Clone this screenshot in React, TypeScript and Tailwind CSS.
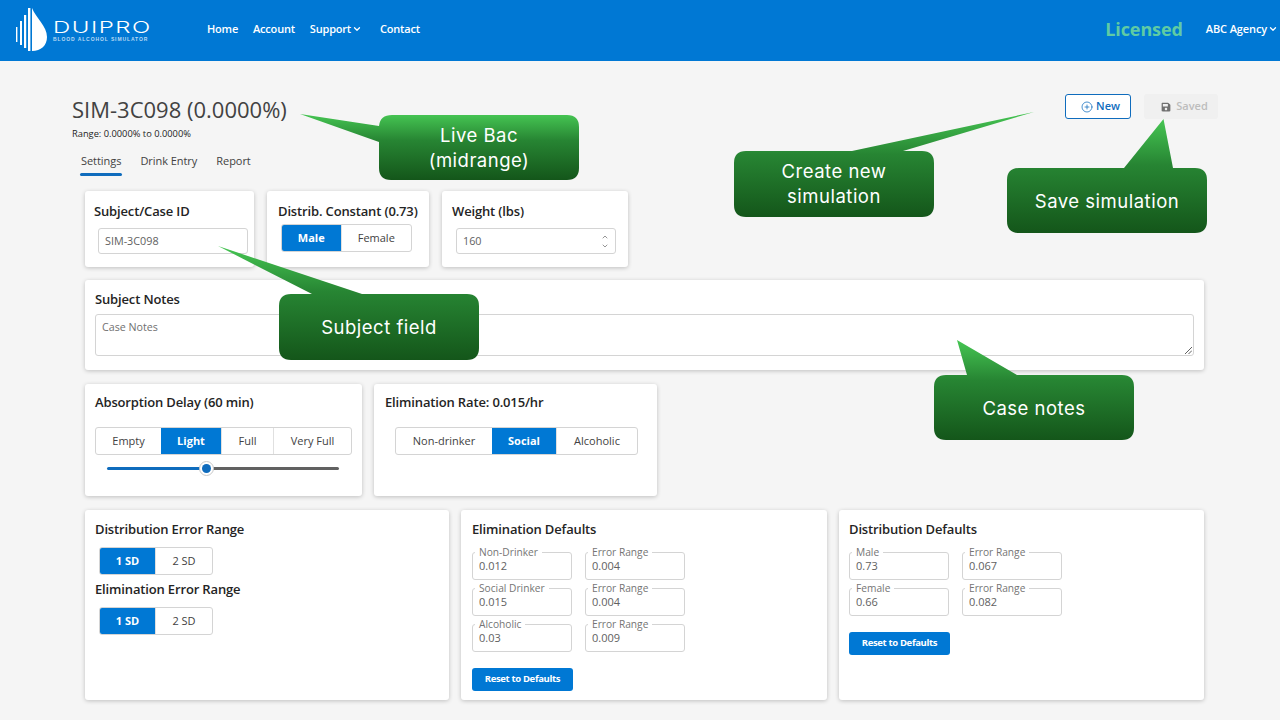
import { ChevronDown, ChevronUp, CirclePlus } from "lucide-react"
import { FaSave } from "react-icons/fa"

const sans = "font-['Open_Sans','Noto_Sans',sans-serif]"

type CalloutProps = {
  id: string
  x: number
  y: number
  w: number
  h: number
  boxX: number
  boxW: number
  boxY: number
  boxH: number
  path: string
  lines: string[]
}

// speech bubble over the page, tail and box are one shape so the gradient runs through both
const Callout = ({ id, x, y, w, h, boxX, boxW, boxY, boxH, path, lines }: CalloutProps) => (
  <div className="absolute" style={{ left: x, top: y, width: w, height: h }}>
    <svg width={w} height={h} className="absolute left-0 top-0 overflow-visible">
      <defs>
        <linearGradient id={id} x1="0" y1="0" x2="0" y2="1">
          <stop offset="0" stopColor="#46c653" />
          <stop offset="0.4" stopColor="#278533" />
          <stop offset="1" stopColor="#14561a" />
        </linearGradient>
      </defs>
      <path d={path} fill={`url(#${id})`} />
    </svg>
    <div
      className="absolute flex flex-col items-center justify-center font-['Inter',sans-serif] text-[18.5px] leading-[25px] tracking-[0.5px] text-white"
      style={{ left: boxX, width: boxW, top: boxY, height: boxH }}
    >
      {lines.map(l => (
        <span key={l}>{l}</span>
      ))}
    </div>
  </div>
)

const Card = ({
  className,
  children
}: {
  className: string
  children: React.ReactNode
}) => (
  <div
    className={`rounded-[3px] bg-white shadow-[0_1px_4px_rgba(0,0,0,0.22)] ${className}`}
  >
    {children}
  </div>
)

const Heading = ({ children }: { children: React.ReactNode }) => (
  <p className="text-[13px] font-semibold leading-[18px] tracking-[-0.15px] text-[#242424]">
    {children}
  </p>
)

const Segments = ({
  items,
  active,
  className
}: {
  items: { label: string; w: number }[]
  active: string
  className?: string
}) => (
  <div
    className={`flex h-[28px] overflow-hidden rounded-[3px] border border-[#d4d4d4] bg-white ${className ?? ""}`}
  >
    {items.map((it, i) => (
      <div
        key={it.label}
        style={{ width: it.w }}
        className={`flex items-center justify-center text-[11px] ${
          it.label === active
            ? "bg-[#0078d4] font-bold text-white"
            : `text-[#424242] ${i > 0 ? "border-l border-[#e0e0e0]" : ""}`
        }`}
      >
        {it.label}
      </div>
    ))}
  </div>
)

const Field = ({ label, value }: { label: string; value: string }) => (
  <div className="relative h-[28px] w-[100px] rounded-[3px] border border-[#d4d4d4] bg-white">
    <span className="absolute left-[2px] top-[-7px] bg-white px-[4px] text-[10.2px] leading-[12px] text-[#757575]">
      {label}
    </span>
    <span className="absolute left-[6px] top-[5px] text-[11px] leading-[15px] text-[#616161]">
      {value}
    </span>
  </div>
)

const FieldRow = ({ a, b, c }: { a: string; b: string; c: string }) => (
  <div className="flex gap-[13px]">
    <Field label={a} value={b} />
    <Field label="Error Range" value={c} />
  </div>
)

const ResetButton = () => (
  <div className="mt-[16px] flex h-[23px] w-[101px] items-center justify-center rounded-[3px] bg-[#0078d4] text-[9.5px] font-bold tracking-[-0.35px] text-white">
    Reset to Defaults
  </div>
)

const Logo = () => (
  <div className="flex items-center">
    <svg width="32" height="44" viewBox="0 0 32 44" className="mr-[5px] shrink-0">
      <path d="M16 1C20 11 31 19 31 30C31 38.500 25 44 16 44Z" fill="#fff" />
      <rect x="12" y="1" width="2.4" height="43" fill="#fff" />
      <rect x="8" y="8" width="2.2" height="33" fill="#fff" />
      <rect x="4" y="14" width="2" height="24" fill="#fff" />
      <rect x="0" y="20" width="1.4" height="15" fill="#fff" />
    </svg>
    <div className="flex w-[96px] flex-col pt-[2px] text-white">
      <span className="origin-left scale-x-[1.5] whitespace-nowrap font-['Inter',sans-serif] text-[16px] font-light leading-[17px] tracking-[1px]">
        DUIPRO
      </span>
      <span className="whitespace-nowrap font-['Liberation_Sans',sans-serif] text-[5px] font-bold leading-[6px] tracking-[0.9px] text-[#b9d9f3]">
        BLOOD ALCOHOL SIMULATOR
      </span>
    </div>
  </div>
)

const App = () => {
  return (
    <div className={`relative h-[720px] w-[1280px] overflow-hidden bg-[#f5f5f5] ${sans}`}>
      <header className="flex h-[61px] items-center justify-between bg-[#0078d4] pb-[3px] pl-[16px] pr-[2px] text-white">
        <div className="flex items-center">
          <Logo />
          <nav className="ml-[58px] flex items-center gap-[15px] text-[11px] font-semibold tracking-[-0.2px]">
            <span>Home</span>
            <span>Account</span>
            <span className="mr-[3px] flex items-center gap-[1px]">
              Support <ChevronDown size={10} strokeWidth={3} />
            </span>
            <span>Contact</span>
          </nav>
        </div>
        <div className="flex items-center">
          <span className="text-[18px] font-bold tracking-[-0.1px] text-[#5fcba4]">Licensed</span>
          <span className="ml-[23px] flex items-center gap-[1px] text-[11px] font-semibold tracking-[-0.12px]">
            ABC Agency <ChevronDown size={10} strokeWidth={3} />
          </span>
        </div>
      </header>

      <main className="pl-[85px] pr-[76px]">
        <div className="flex items-start justify-between">
          <div className="-ml-[13px] pt-[33px]">
            <h1 className="text-[22px] leading-[30px] text-[#424242]">
              SIM-3C098 (0.0000%)
            </h1>
            <p className="mt-[4px] text-[9.3px] leading-[12px] text-[#242424]">
              Range: 0.0000% to 0.0000%
            </p>
            <div className="mt-[13px] flex gap-[19px] pl-[9px] text-[11px] tracking-[-0.05px] text-[#424242]">
              <span className="relative pb-[8px] leading-[15px]">
                Settings
                <span className="absolute -left-[1px] -right-[1px] bottom-0 h-[3px] rounded-full bg-[#0f6cbd]" />
              </span>
              <span className="leading-[15px]">Drink Entry</span>
              <span className="leading-[15px]">Report</span>
            </div>
          </div>
          <div className="-mr-[14px] flex gap-[13px] pt-[33px]">
            <div className="flex h-[25px] w-[66px] items-center justify-center gap-[3px] rounded-[3px] border border-[#0f6cbd] bg-white pl-[5px] text-[11px] font-semibold text-[#0f6cbd]">
              <CirclePlus size={12} strokeWidth={1.5} /> New
            </div>
            <div className="flex h-[25px] w-[74px] items-center justify-center gap-[5px] rounded-[3px] bg-[#f0f0f0] pl-[7px] text-[11px] font-semibold text-[#bdbdbd]">
              <FaSave size={10} className="text-[#707070]" /> Saved
            </div>
          </div>
        </div>

        <div className="mt-[15px] flex gap-[13px]">
          <Card className="h-[76px] w-[169px] pl-[9px] pr-[10px] pt-[11px]">
            <Heading>Subject/Case ID</Heading>
            <div className="ml-[4px] mt-[8px] flex h-[26px] w-[150px] items-center rounded-[3px] border border-[#d4d4d4] px-[6px] text-[10.8px] text-[#616161]">
              SIM-3C098
            </div>
          </Card>
          <Card className="h-[76px] w-[162px] pl-[11px] pt-[11px]">
            <Heading>Distrib. Constant (0.73)</Heading>
            <Segments
              className="ml-[3px] mt-[4px] w-[131px]"
              items={[
                { label: "Male", w: 59 },
                { label: "Female", w: 71 }
              ]}
              active="Male"
            />
          </Card>
          <Card className="h-[76px] w-[186px] px-[10px] pt-[11px]">
            <Heading>Weight (lbs)</Heading>
            <div className="ml-[4px] mt-[8px] flex h-[26px] w-[160px] items-center justify-between rounded-[3px] border border-[#d4d4d4] pl-[6px] pr-[6px] text-[10.8px] text-[#616161]">
              160
              <span className="flex flex-col text-[#616161]">
                <ChevronUp size={8} strokeWidth={2} />
                <ChevronDown size={8} strokeWidth={2} className="mt-[1px]" />
              </span>
            </div>
          </Card>
        </div>

        <Card className="mt-[13px] h-[90px] w-[1119px] px-[10px] pt-[10px]">
          <Heading>Subject Notes</Heading>
          <div className="relative mt-[6px] h-[42px] rounded-[3px] border border-[#d4d4d4] px-[6px] py-[4px] text-[10.7px] text-[#707070]">
            Case Notes
            <svg width="8" height="8" viewBox="0 0 8 8" className="absolute bottom-[1px] right-[1px]">
              <path d="M1 8L8 1M4.5 8L8 4.5" stroke="#616161" strokeWidth="1" />
            </svg>
          </div>
        </Card>

        <div className="mt-[14px] flex gap-[12px]">
          <Card className="h-[112px] w-[277px] px-[10px] pt-[9px]">
            <Heading>Absorption Delay (60 min)</Heading>
            <Segments
              className="mt-[16px] w-[257px]"
              items={[
                { label: "Empty", w: 65 },
                { label: "Light", w: 60 },
                { label: "Full", w: 52 },
                { label: "Very Full", w: 78 }
              ]}
              active="Light"
            />
            <div className="relative mx-[12px] mt-[12px] flex h-[3px] w-[232px]">
              <div className="h-full w-[100px] rounded-l-full bg-[#0f6cbd]" />
              <div className="h-full flex-1 rounded-r-full bg-[#616161]" />
              <span className="absolute left-[92px] top-[-6px] flex h-[15px] w-[15px] items-center justify-center rounded-full border border-[#c8c8c8] bg-white">
                <span className="h-[9px] w-[9px] rounded-full bg-[#0f6cbd]" />
              </span>
            </div>
          </Card>
          <Card className="h-[112px] w-[283px] px-[11px] pt-[9px]">
            <Heading>Elimination Rate: 0.015/hr</Heading>
            <Segments
              className="ml-[10px] mt-[16px] w-[243px]"
              items={[
                { label: "Non-drinker", w: 96 },
                { label: "Social", w: 64 },
                { label: "Alcoholic", w: 81 }
              ]}
              active="Social"
            />
          </Card>
        </div>

        <div className="mt-[14px] flex gap-[12px]">
          <Card className="h-[190px] w-[364px] px-[10px] pt-[10px]">
            <Heading>Distribution Error Range</Heading>
            <Segments
              className="ml-[4px] mt-[9px] w-[114px]"
              items={[
                { label: "1 SD", w: 55 },
                { label: "2 SD", w: 57 }
              ]}
              active="1 SD"
            />
            <div className="mt-[5px]">
              <Heading>Elimination Error Range</Heading>
            </div>
            <Segments
              className="ml-[4px] mt-[9px] w-[114px]"
              items={[
                { label: "1 SD", w: 55 },
                { label: "2 SD", w: 57 }
              ]}
              active="1 SD"
            />
          </Card>
          <Card className="h-[190px] w-[366px] px-[11px] pt-[10px]">
            <Heading>Elimination Defaults</Heading>
            <div className="mt-[14px] flex flex-col gap-[8px]">
              <FieldRow a="Non-Drinker" b="0.012" c="0.004" />
              <FieldRow a="Social Drinker" b="0.015" c="0.004" />
              <FieldRow a="Alcoholic" b="0.03" c="0.009" />
            </div>
            <ResetButton />
          </Card>
          <Card className="h-[190px] w-[365px] px-[10px] pt-[10px]">
            <Heading>Distribution Defaults</Heading>
            <div className="mt-[14px] flex flex-col gap-[8px]">
              <FieldRow a="Male" b="0.73" c="0.067" />
              <FieldRow a="Female" b="0.66" c="0.082" />
            </div>
            <ResetButton />
          </Card>
        </div>
      </main>

      <Callout
        id="c1"
        x={300}
        y={113}
        w={280}
        h={67}
        boxX={79}
        boxW={200}
        boxY={2}
        boxH={65}
        lines={["Live Bac", "(midrange)"]}
        path="M0 1L79 13Q80 2 92 2H267Q279 2 279 14V55Q279 67 267 67H91Q79 67 79 55V29Z"
      />
      <Callout
        id="c2"
        x={734}
        y={111}
        w={300}
        h={106}
        boxX={0}
        boxW={200}
        boxY={40}
        boxH={66}
        lines={["Create new", "simulation"]}
        path="M300 1L169 40H188Q200 40 200 52V94Q200 106 188 106H12Q0 106 0 94V52Q0 40 12 40H118Z"
      />
      <Callout
        id="c3"
        x={1007}
        y={119}
        w={200}
        h={114}
        boxX={0}
        boxW={200}
        boxY={50}
        boxH={65}
        lines={["Save simulation"]}
        path="M156.500 0L166 49H188Q200 49 200 61V102Q200 114 188 114H12Q0 114 0 102V61Q0 49 12 49H117Z"
      />
      <Callout
        id="c4"
        x={218}
        y={246}
        w={261}
        h={114}
        boxX={61}
        boxW={200}
        boxY={48}
        boxH={66}
        lines={["Subject field"]}
        path="M0 0L144 48H249Q261 48 261 60V102Q261 114 249 114H73Q61 114 61 102V60Q61 48 73 48H94Z"
      />
      <Callout
        id="c5"
        x={934}
        y={340}
        w={200}
        h={100}
        boxX={0}
        boxW={200}
        boxY={36}
        boxH={65}
        lines={["Case notes"]}
        path="M23 0L83 35H188Q200 35 200 47V88Q200 100 188 100H12Q0 100 0 88V47Q0 35 12 35H33Z"
      />
    </div>
  )
}

export default App
